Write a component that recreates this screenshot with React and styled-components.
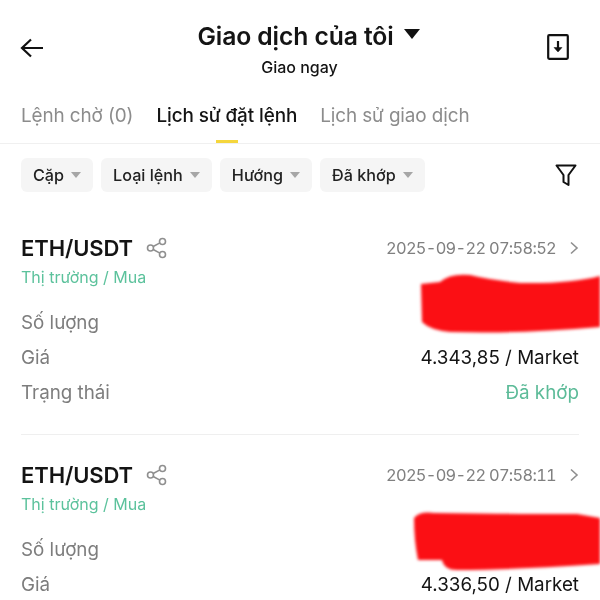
import React from "react";
import styled, { createGlobalStyle } from "styled-components";

const Global = createGlobalStyle`
	html, body { margin: 0; padding: 0; background: #fff; }
	body { width: 600px; height: 600px; overflow: hidden; font-family: "Inter", "Noto Sans", sans-serif; }
`;

const Page = styled.div`
	width: 600px;
	height: 600px;
	overflow: hidden;
	color: #141414;
	filter: blur(0.35px);
`;

const Header = styled.header`
	height: 100px;
	padding: 0 31px 0 20px;
	display: flex;
	align-items: flex-start;
	justify-content: space-between;
	box-sizing: border-box;
`;

const IconSlot = styled.div`
	margin-top: ${props => props.$top}px;
	display: flex;
`;

const HeaderCenter = styled.div`
	padding-top: 20px;
	display: flex;
	flex-direction: column;
	align-items: center;
	margin-left: 26px;
`;

const Title = styled.h1`
	margin: 0;
	font-size: 24.7px;
	line-height: 32px;
	font-weight: 600;
	letter-spacing: -0.1px;
	display: flex;
	align-items: center;
	gap: 10px;
`;

const Caret = styled.span`
	width: 0;
	height: 0;
	border-left: 8px solid transparent;
	border-right: 8px solid transparent;
	border-top: 10px solid #111;
	margin-top: -5px;
`;

const Subtitle = styled.div`
	margin-top: 5px;
	margin-right: 18px;
	font-size: 16px;
	line-height: 20px;
	font-weight: 500;
`;

const Tabs = styled.nav`
	height: 43px;
	padding-left: 21px;
	display: flex;
	gap: 23px;
	border-bottom: 1px solid #f0f0f0;
	box-sizing: content-box;
`;

const Tab = styled.div`
	position: relative;
	font-size: 18.9px;
	line-height: 32px;
	color: ${props => (props.$active ? "#141414" : "#8c8c8c")};
	font-weight: ${props => (props.$active ? 500 : 400)};
	letter-spacing: -0.1px;
	${props =>
		props.$active &&
		`&::after {
			content: "";
			position: absolute;
			left: 60px;
			bottom: 0;
			width: 22px;
			height: 3px;
			background: #f5d63d;
		}`}
`;

const Filters = styled.div`
	margin-top: 14px;
	padding: 0 22px 0 21px;
	display: flex;
	align-items: center;
	gap: 8px;
`;

const Chip = styled.div`
	height: 34px;
	padding: 0 12px;
	display: flex;
	align-items: center;
	gap: 7px;
	background: #f5f5f5;
	border-radius: 6px;
	font-size: 16.2px;
	font-weight: 500;
	color: #222;
`;

const ChipCaret = styled.span`
	width: 0;
	height: 0;
	border-left: 5px solid transparent;
	border-right: 5px solid transparent;
	border-top: 6px solid #a6a6a6;
`;

const FilterButton = styled.div`
	margin-left: auto;
	display: flex;
`;

const List = styled.div`
	margin-top: 40px;
	padding: 0 21px;
`;

const Card = styled.article`
	position: relative;
	height: 203px;
	box-sizing: border-box;
	border-bottom: 1px solid #efefef;
	margin-bottom: 24px;
`;

const CardTop = styled.div`
	display: flex;
	align-items: center;
	height: 32px;
`;

const Pair = styled.div`
	font-size: 22px;
	font-weight: 600;
	letter-spacing: -0.1px;
`;

const ShareIcon = styled.div`
	margin-left: 13px;
	display: flex;
`;

const Time = styled.div`
	margin-left: auto;
	font-size: 16.4px;
	font-variant-numeric: tabular-nums;
	letter-spacing: -0.7px;
	color: #808080;
	display: flex;
	align-items: center;
	gap: 13px;
`;

const OrderType = styled.div`
	margin-top: 3px;
	font-size: 16px;
	line-height: 20px;
	color: #5cc29c;
`;

const Rows = styled.div`
	margin-top: 18px;
`;

const Row = styled.div`
	height: 35px;
	display: flex;
	align-items: center;
	justify-content: space-between;
`;

const Label = styled.div`
	font-size: 18.8px;
	color: #7d7d7d;
`;

const Value = styled.div`
	font-size: 18.8px;
	font-weight: 400;
	color: ${props => props.$color || "#141414"};
`;

const Scribble = styled.svg`
	position: absolute;
	left: ${props => props.$left}px;
	top: ${props => props.$top}px;
	filter: blur(1.5px);
`;

const BackIcon = () => (
	<svg width="24" height="20" viewBox="0 0 24 20" fill="none" stroke="#111" strokeWidth="2.2">
		<path d="M23 10H2M11 1.5L2 10l9 8.5" />
	</svg>
);

const DownloadIcon = () => (
	<svg width="22" height="26" viewBox="0 0 22 26" fill="none" stroke="#111">
		<rect x="1.2" y="1.2" width="19.6" height="23.6" rx="1" strokeWidth="2.2" />
		<path d="M11 7v10" strokeWidth="2.2" />
		<path d="M7 13.5h8L11 18z" fill="#111" strokeWidth="0.5" />
	</svg>
);

const FunnelIcon = () => (
	<svg width="24" height="24" viewBox="0 0 24 24" fill="none" stroke="#111" strokeWidth="2" strokeLinejoin="round">
		<path d="M2.5 2.5h19l-7 9.5v10l-5-3v-7z" />
	</svg>
);

const Share = () => (
	<svg width="22" height="22" viewBox="0 0 22 22" fill="none" stroke="#8f8f8f" strokeWidth="1.6">
		<circle cx="4.5" cy="11" r="3" />
		<circle cx="16.5" cy="4.5" r="3" />
		<circle cx="16.5" cy="17.5" r="3" />
		<path d="M7.2 9.5l6.7-3.6M7.2 12.5l6.7 3.6" />
	</svg>
);

const Chevron = () => (
	<svg width="10" height="14" viewBox="0 0 10 14" fill="none" stroke="#8f8f8f" strokeWidth="1.6">
		<path d="M2 1.5L8 7l-6 5.5" />
	</svg>
);

const orders = [
	{
		time: "2025-09-22 07:58:52",
		price: "4.343,85 / Market",
		status: "Đã khớp",
		blob: "M1 12 L20 10 Q30 1 50 3 Q70 8 100 11 Q150 12 180 4 L180 55 Q100 62 30 60 Q10 58 2 50 Z",
		left: 399,
		top: 40
	},
	{
		time: "2025-09-22 07:58:11",
		price: "4.336,50 / Market",
		blob: "M2 8 Q8 1 22 3 Q100 4 165 4 L188 8 L188 54 Q100 60 45 60 Q32 60 30 50 L6 50 Q2 30 2 8 Z",
		left: 391,
		top: 51
	}
];

const Order = ({ order }) => (
	<Card>
		<CardTop>
			<Pair>ETH/USDT</Pair>
			<ShareIcon>
				<Share />
			</ShareIcon>
			<Time>
				{order.time}
				<Chevron />
			</Time>
		</CardTop>
		<OrderType>Thị trường / Mua</OrderType>
		<Rows>
			<Row>
				<Label>Số lượng</Label>
			</Row>
			<Row>
				<Label>Giá</Label>
				<Value>{order.price}</Value>
			</Row>
			{order.status && (
				<Row>
					<Label>Trạng thái</Label>
					<Value $color="#5cbb98">{order.status}</Value>
				</Row>
			)}
		</Rows>
		<Scribble $left={order.left} $top={order.top} width="190" height="62" viewBox="0 0 190 62">
			<path d={order.blob} fill="#fb0f14" />
		</Scribble>
	</Card>
);

export default function App() {
	return (
		<Page>
			<Global />
			<Header>
				<IconSlot $top={38}>
					<BackIcon />
				</IconSlot>
				<HeaderCenter>
					<Title>
						Giao dịch của tôi
						<Caret />
					</Title>
					<Subtitle>Giao ngay</Subtitle>
				</HeaderCenter>
				<IconSlot $top={34}>
					<DownloadIcon />
				</IconSlot>
			</Header>
			<Tabs>
				<Tab>Lệnh chờ (0)</Tab>
				<Tab $active>Lịch sử đặt lệnh</Tab>
				<Tab>Lịch sử giao dịch</Tab>
			</Tabs>
			<Filters>
				<Chip>Cặp<ChipCaret /></Chip>
				<Chip>Loại lệnh<ChipCaret /></Chip>
				<Chip>Hướng<ChipCaret /></Chip>
				<Chip>Đã khớp<ChipCaret /></Chip>
				<FilterButton>
					<FunnelIcon />
				</FilterButton>
			</Filters>
			<List>
				{orders.map(order => (
					<Order key={order.time} order={order} />
				))}
			</List>
		</Page>
	);
}
